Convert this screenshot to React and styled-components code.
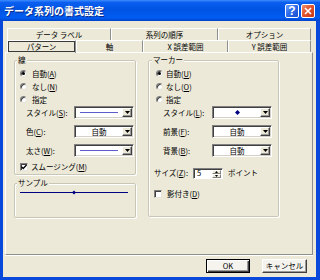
import React from "react";
import styled, { createGlobalStyle } from "styled-components";

const GlobalStyle = createGlobalStyle`
  html, body { margin: 0; padding: 0; }
  body {
    width: 320px; height: 280px; overflow: hidden; background: #ECE9D8;
    font-family: "Noto Sans CJK JP", "Noto Sans", sans-serif;
    font-size: 7.5px; color: #000;
  }
  * { box-sizing: border-box; }
`;

const Window = styled.div`
  width: 320px;
  height: 280px;
  display: flex;
  flex-direction: column;
`;

const TitleBar = styled.div`
  height: 21px;
  flex: none;
  display: flex;
  align-items: center;
  padding: 0 5px 0 4px;
  background: linear-gradient(to bottom, #3D8BFF 0%, #0A5FF0 12%, #0054E3 45%, #005CF2 85%, #0042C8 100%);
`;

const TitleText = styled.div`
  flex: 1;
  color: #fff;
  font-weight: bold;
  font-size: 10px;
  line-height: 1;
  text-shadow: 1px 1px 0 #0A2A8A;
  white-space: nowrap;
`;

const CaptionButton = styled.div`
  width: 14px;
  height: 14px;
  margin-left: 2px;
  border: 1px solid #fff;
  border-radius: 2px;
  display: flex;
  align-items: center;
  justify-content: center;
  background: ${(p) =>
    p.$close
      ? "linear-gradient(135deg, #F09070 0%, #E0552E 45%, #C8381A 100%)"
      : "linear-gradient(135deg, #6FA0FF 0%, #2E6DEB 45%, #1B4FCF 100%)"};
  color: #fff;
  font-family: "Liberation Sans", sans-serif;
  font-weight: bold;
  font-size: 12px;
  line-height: 1;
`;

const Frame = styled.div`
  flex: 1;
  display: flex;
  flex-direction: column;
  background: #ECE9D8;
  border-style: solid;
  border-color: #0848DA;
  border-width: 0 4px 3px 3px;
  padding: 7px 3px 0 2px;
`;

const TabRow = styled.div`
  display: flex;
  height: 12px;
  margin-left: 2px;
  flex: none;
`;

const Tab = styled.div`
  flex: none;
  width: ${(p) => p.$w}px;
  display: flex;
  align-items: center;
  justify-content: center;
  border-top: 1px solid #fff;
  border-left: 1px solid #fff;
  border-right: 1px solid #8E8F8F;
  line-height: 1;
  white-space: nowrap;
  position: relative;
  background: #ECE9D8;
  margin-bottom: ${(p) => (p.$active ? "-1px" : "0")};
  height: ${(p) => (p.$active ? "13px" : "12px")};
  z-index: ${(p) => (p.$active ? 1 : 0)};
`;

const FocusRect = styled.span`
  width: 100%;
  height: 11px;
  margin-top: -1px;
  display: flex;
  align-items: center;
  justify-content: center;
  border: 1px solid #3A3A3A;
`;

const Panel = styled.div`
  flex: 1;
  border: 1px solid;
  border-color: #fff #8E8F8F #8E8F8F #fff;
  box-shadow: 0 1px 0 #fff;
  padding: 3px 0 0 8px;
  display: grid;
  grid-template-columns: 122px 131px;
  column-gap: 12px;
  align-items: start;
  align-content: start;
`;

const Column = styled.div`
  display: flex;
  flex-direction: column;
  gap: 4px;
`;

const Group = styled.fieldset`
  margin: 0;
  padding: 3px 0 0 0;
  min-width: 0;
  height: ${(p) => p.$h}px;
  border: 1px solid #C9C6B6;
  border-radius: 2px;
  box-shadow: inset 1px 1px 0 #fff, 1px 1px 0 #fff;
  display: flex;
  flex-direction: column;
`;

const Legend = styled.legend`
  padding: 0 1px;
  margin-left: ${(p) => p.$ml}px;
  height: 8px;
  line-height: 8px;
  background: #ECE9D8;
  white-space: nowrap;
`;

const Key = styled.u`
  text-decoration: underline;
`;

const OptionRow = styled.div`
  height: ${(p) => p.$h || 13}px;
  margin-top: ${(p) => p.$mt || 0}px;
  display: flex;
  align-items: center;
  gap: ${(p) => p.$gap || 5}px;
  padding-left: ${(p) => p.$pl}px;
  line-height: 1;
  white-space: nowrap;
`;

const RadioCircle = styled.span`
  flex: none;
  width: 7px;
  height: 7px;
  border-radius: 50%;
  background: #fff;
  border: 1px solid;
  border-color: #808080 #E8E6DC #E8E6DC #808080;
  box-shadow: inset 1px 1px 0 #404040;
  display: flex;
  align-items: center;
  justify-content: center;
  &::after {
    content: "";
    width: 3px;
    height: 3px;
    border-radius: 50%;
    background: ${(p) => (p.$checked ? "#000" : "transparent")};
  }
`;

const CheckBox = styled.span`
  flex: none;
  width: 8px;
  height: 8px;
  background: #fff;
  border: 1px solid;
  border-color: #808080 #E8E6DC #E8E6DC #808080;
  box-shadow: inset 1px 1px 0 #404040;
  display: flex;
  align-items: center;
  justify-content: center;
`;

const FieldRow = styled.div`
  height: 13px;
  margin-top: ${(p) => p.$mt || 0}px;
  display: flex;
  align-items: center;
  justify-content: space-between;
  padding-left: ${(p) => p.$pl}px;
  padding-right: ${(p) => p.$pr}px;
  line-height: 1;
  white-space: nowrap;
`;

const Combo = styled.div`
  flex: none;
  width: 60px;
  height: 13px;
  display: flex;
  background: #fff;
  border: 1px solid;
  border-color: #808080 #fff #fff #808080;
  box-shadow: inset 1px 1px 0 #404040, inset -1px -1px 0 #D4D0C8;
  padding: 1px;
`;

const ComboField = styled.div`
  flex: 1;
  display: flex;
  align-items: center;
  justify-content: center;
  line-height: 1;
`;

const DropButton = styled.div`
  width: 10px;
  flex: none;
  background: #ECE9D8;
  border: 1px solid;
  border-color: #fff #404040 #404040 #fff;
  box-shadow: inset -1px -1px 0 #9A9A9A;
  display: flex;
  align-items: center;
  justify-content: center;
`;

const SizeLabel = styled.span`
  width: 34px;
  flex: none;
`;

const Spinner = styled.div`
  width: 30px;
  height: 11px;
  flex: none;
  display: flex;
  background: #fff;
  border: 1px solid;
  border-color: #808080 #fff #fff #808080;
  box-shadow: inset 1px 1px 0 #404040;
  padding: 1px;
`;

const SpinValue = styled.div`
  flex: 1;
  display: flex;
  align-items: center;
  padding-left: 2px;
  line-height: 1;
`;

const SpinButtons = styled.div`
  width: 9px;
  flex: none;
  display: flex;
  flex-direction: column;
`;

const SpinButton = styled.div`
  flex: 1;
  background: #ECE9D8;
  border: 1px solid;
  border-color: #fff #808080 #808080 #fff;
  display: flex;
  align-items: center;
  justify-content: center;
`;

const SampleArea = styled.div`
  flex: 1;
  display: flex;
  align-items: center;
  padding: 0 6px 4px 5px;
`;

const ButtonRow = styled.div`
  flex: none;
  height: 14px;
  margin: 4px 0;
  padding-right: 6px;
  display: flex;
  justify-content: flex-end;
  gap: 12px;
`;

const DialogButton = styled.div`
  width: ${(p) => p.$w}px;
  height: 14px;
  display: flex;
  align-items: center;
  justify-content: center;
  line-height: 1;
  background: #F4F3EE;
  border: 1px solid;
  border-color: ${(p) => (p.$default ? "#000" : "#fff #404040 #404040 #fff")};
  box-shadow: ${(p) =>
    p.$default
      ? "inset 1px 1px 0 #fff, inset -1px -1px 0 #404040, inset -2px -2px 0 #9A9A9A"
      : "inset -1px -1px 0 #9A9A9A"};
  font-family: "Noto Sans CJK JP", "Liberation Sans", sans-serif;
`;

const Arrow = () => (
  <svg width="5" height="3" viewBox="0 0 5 3">
    <path d="M0 0H5L2.5 3Z" fill="#000" />
  </svg>
);

const SmallArrow = ({ up }) => (
  <svg width="3" height="2" viewBox="0 0 3 2">
    <path d={up ? "M0 2H3L1.5 0Z" : "M0 0H3L1.5 2Z"} fill="#000" />
  </svg>
);

const LineSwatch = () => (
  <svg width="38" height="3" viewBox="0 0 38 3">
    <line x1="0" y1="1.5" x2="38" y2="1.5" stroke="#5C5CCB" strokeWidth="1" />
  </svg>
);

const Diamond = () => (
  <svg width="5" height="5" viewBox="0 0 5 5">
    <path d="M2.5 0L5 2.5L2.5 5L0 2.5Z" fill="#000080" />
  </svg>
);

const Check = () => (
  <svg width="6" height="6" viewBox="0 0 6 6">
    <path d="M0.5 2.8L2.2 4.5L5.5 1" stroke="#000" strokeWidth="1.3" fill="none" />
  </svg>
);

const CloseGlyph = () => (
  <svg width="8" height="8" viewBox="0 0 8 8">
    <path d="M1 1L7 7M7 1L1 7" stroke="#fff" strokeWidth="1.6" />
  </svg>
);

const SampleDrawing = () => (
  <svg width="108" height="5" viewBox="0 0 108 5">
    <line x1="0" y1="2.5" x2="108" y2="2.5" stroke="#000080" strokeWidth="1" />
    <path d="M54 0.5L56 2.5L54 4.5L52 2.5Z" fill="#000080" />
  </svg>
);

const ComboBox = ({ children }) => (
  <Combo>
    <ComboField>{children}</ComboField>
    <DropButton>
      <Arrow />
    </DropButton>
  </Combo>
);

const Label = ({ text, k, colon }) => (
  <span>
    {text}(<Key>{k}</Key>){colon ? ":" : ""}
  </span>
);

export default function App() {
  return (
    <>
      <GlobalStyle />
      <Window>
        <TitleBar>
          <TitleText>データ系列の書式設定</TitleText>
          <CaptionButton>?</CaptionButton>
          <CaptionButton $close>
            <CloseGlyph />
          </CaptionButton>
        </TitleBar>
        <Frame>
          <TabRow>
            <Tab $w={104}>データ ラベル</Tab>
            <Tab $w={107}>系列の順序</Tab>
            <Tab $w={93}>オプション</Tab>
          </TabRow>
          <TabRow>
            <Tab $w={69} $active>
              <FocusRect>パターン</FocusRect>
            </Tab>
            <Tab $w={67}>軸</Tab>
            <Tab $w={85}>X 誤差範囲</Tab>
            <Tab $w={83}>Y 誤差範囲</Tab>
          </TabRow>
          <Panel>
            <Column>
              <Group $h={119}>
                <Legend $ml={2}>線</Legend>
                <OptionRow $pl={5}>
                  <RadioCircle $checked />
                  <Label text="自動" k="A" />
                </OptionRow>
                <OptionRow $pl={5}>
                  <RadioCircle />
                  <Label text="なし" k="N" />
                </OptionRow>
                <OptionRow $pl={5}>
                  <RadioCircle />
                  <span>指定</span>
                </OptionRow>
                <FieldRow $pl={11} $pr={1}>
                  <Label text="スタイル" k="S" colon />
                  <ComboBox>
                    <LineSwatch />
                  </ComboBox>
                </FieldRow>
                <FieldRow $pl={11} $pr={1} $mt={6}>
                  <Label text="色" k="C" colon />
                  <ComboBox>自動</ComboBox>
                </FieldRow>
                <FieldRow $pl={11} $pr={1} $mt={6}>
                  <Label text="太さ" k="W" colon />
                  <ComboBox>
                    <LineSwatch />
                  </ComboBox>
                </FieldRow>
                <OptionRow $pl={5} $h={12} $mt={4} $gap={3}>
                  <CheckBox>
                    <Check />
                  </CheckBox>
                  <Label text="スムージング" k="M" />
                </OptionRow>
              </Group>
              <Group $h={39}>
                <Legend $ml={2}>サンプル</Legend>
                <SampleArea>
                  <SampleDrawing />
                </SampleArea>
              </Group>
            </Column>
            <Group $h={161}>
              <Legend $ml={3}>マーカー</Legend>
              <OptionRow $pl={7} $gap={3}>
                <RadioCircle $checked />
                <Label text="自動" k="U" />
              </OptionRow>
              <OptionRow $pl={7} $gap={3}>
                <RadioCircle />
                <Label text="なし" k="O" />
              </OptionRow>
              <OptionRow $pl={7} $gap={3}>
                <RadioCircle />
                <span>指定</span>
              </OptionRow>
              <FieldRow $pl={14} $pr={6}>
                <Label text="スタイル" k="L" colon />
                <ComboBox>
                  <Diamond />
                </ComboBox>
              </FieldRow>
              <FieldRow $pl={14} $pr={6} $mt={6}>
                <Label text="前景" k="F" colon />
                <ComboBox>自動</ComboBox>
              </FieldRow>
              <FieldRow $pl={14} $pr={6} $mt={6}>
                <Label text="背景" k="B" colon />
                <ComboBox>自動</ComboBox>
              </FieldRow>
              <OptionRow $pl={5} $h={12} $mt={10} $gap={5}>
                <SizeLabel>
                  <Label text="サイズ" k="Z" colon />
                </SizeLabel>
                <Spinner>
                  <SpinValue>5</SpinValue>
                  <SpinButtons>
                    <SpinButton>
                      <SmallArrow up />
                    </SpinButton>
                    <SpinButton>
                      <SmallArrow />
                    </SpinButton>
                  </SpinButtons>
                </Spinner>
                <span>ポイント</span>
              </OptionRow>
              <OptionRow $pl={5} $h={12} $mt={9} $gap={5}>
                <CheckBox />
                <Label text="影付き" k="D" />
              </OptionRow>
            </Group>
          </Panel>
          <ButtonRow>
            <DialogButton $w={44} $default>
              OK
            </DialogButton>
            <DialogButton $w={45}>キャンセル</DialogButton>
          </ButtonRow>
        </Frame>
      </Window>
    </>
  );
}
